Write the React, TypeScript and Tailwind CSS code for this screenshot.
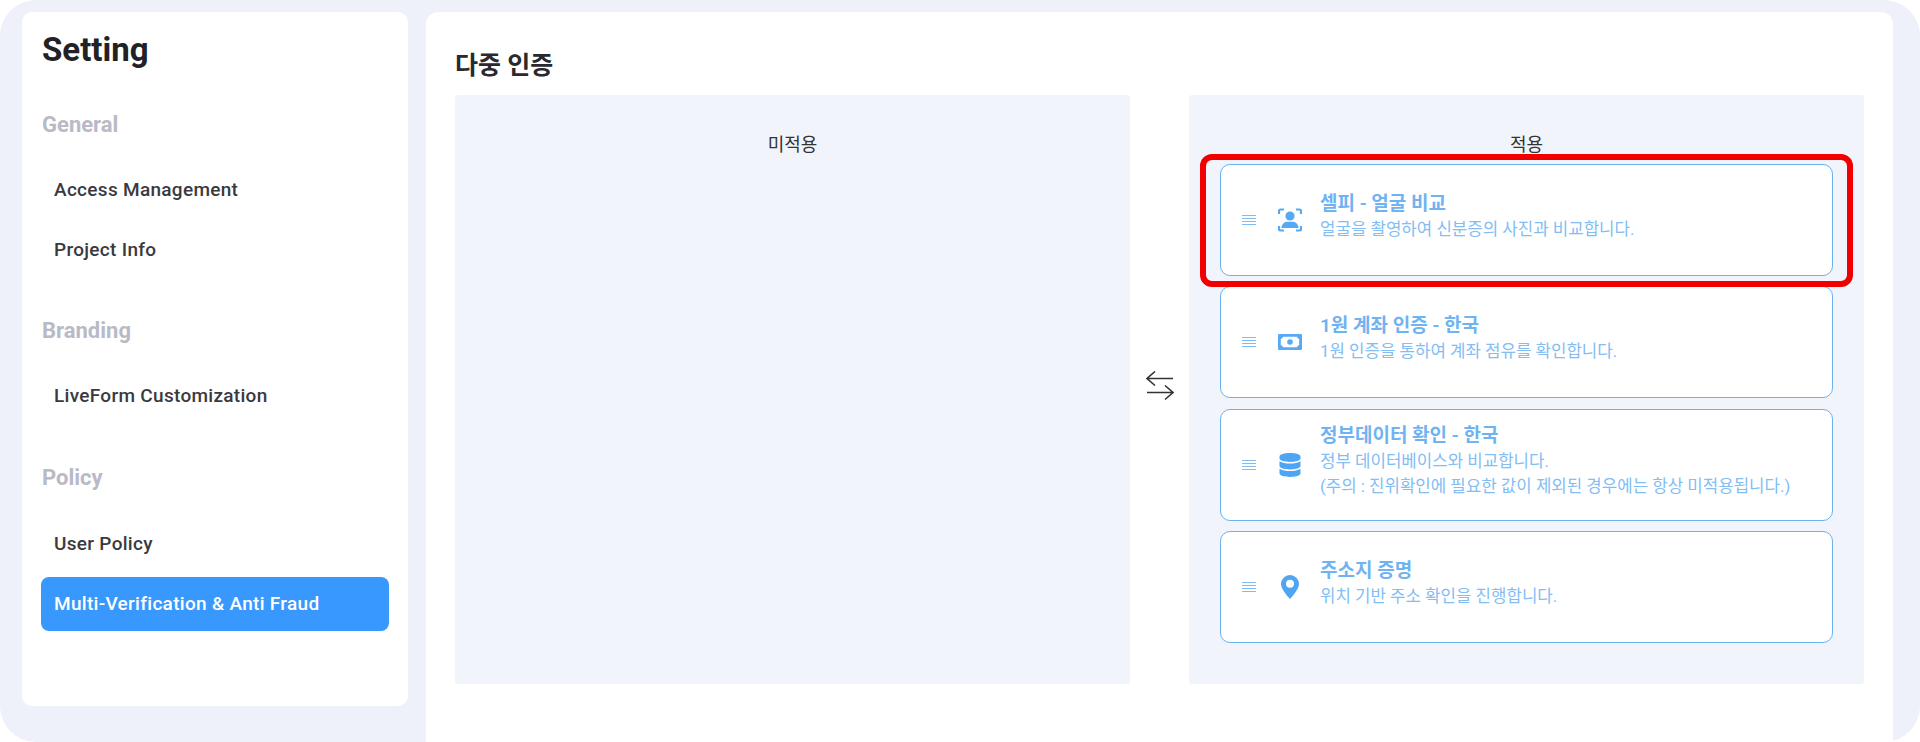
import { FaDatabase } from 'react-icons/fa';

const SANS = "font-['Roboto','Noto_Sans_CJK_KR',sans-serif]";

function DragHandle() {
  return (
    <svg width="14" height="12" viewBox="0 0 14 12" className="shrink-0 text-[#7fbcf4]" stroke="currentColor" strokeWidth="1">
      <path d="M0 1.5h14M0 4.5h14M0 7.5h14M0 10.5h14" />
    </svg>
  );
}

function FaceIcon() {
  return (
    <svg width="24" height="24" viewBox="0 0 24 24" fill="none" className="text-[#55a9f5]">
      <path d="M1 6V3a1.5 1.5 0 0 1 1.5-1.5H6M18 1.5h3.500A1.500 1.500 0 0 1 23 3v3M1 18v3a1.500 1.500 0 0 0 1.500 1.500H6M18 22.500h3.500A1.500 1.500 0 0 0 23 21v-3" stroke="currentColor" strokeWidth="2.200" />
      <circle cx="12" cy="8" r="4.600" fill="currentColor" />
      <path d="M3.500 20c0-3.800 3-6.300 5.500-6.300h6c2.500 0 5.500 2.500 5.500 6.300z" fill="currentColor" />
    </svg>
  );
}

function MoneyIcon() {
  return (
    <svg width="24" height="16" viewBox="0 0 24 16" className="text-[#55a9f5]">
      <path fillRule="evenodd" fill="currentColor" d="M1 0h22a1 1 0 0 1 1 1v14a1 1 0 0 1-1 1H1a1 1 0 0 1-1-1V1a1 1 0 0 1 1-1zm4 2.800A3 3 0 0 1 2.800 5v6A3 3 0 0 1 5 13.200h14a3 3 0 0 1 2.200-2.200V5A3 3 0 0 1 19 2.800z" />
      <circle cx="12" cy="8" r="2.800" fill="currentColor" />
    </svg>
  );
}

function PinIcon() {
  return (
    <svg width="18" height="24" viewBox="0 0 18 24" className="text-[#4da5f4]">
      <path fillRule="evenodd" fill="currentColor" d="M9 0a9 9 0 0 1 9 9c0 4.500-5 10.500-9 15C5 19.500 0 13.500 0 9a9 9 0 0 1 9-9zm0 4.800a4 4 0 1 0 0 8 4 4 0 0 0 0-8z" />
    </svg>
  );
}

function SwapIcon() {
  return (
    <svg width="28" height="30" viewBox="0 0 28 30" fill="none" stroke="#333" strokeWidth="1.600">
      <path d="M1 7.500h26M9 0.500 1 7.500l8 7" />
      <path d="M1 21.500h26M19 14.500l8 7-8 7" />
    </svg>
  );
}

const cards = [
  { title: '셀피 - 얼굴 비교', lines: ['얼굴을 촬영하여 신분증의 사진과 비교합니다.'], icon: <FaceIcon /> },
  { title: '1원 계좌 인증 - 한국', lines: ['1원 인증을 통하여 계좌 점유를 확인합니다.'], icon: <MoneyIcon /> },
  {
    title: '정부데이터 확인 - 한국',
    lines: ['정부 데이터베이스와 비교합니다.', '(주의 : 진위확인에 필요한 값이 제외된 경우에는 항상 미적용됩니다.)'],
    icon: <FaDatabase size={24} className="text-[#4da5f4]" />,
  },
  { title: '주소지 증명', lines: ['위치 기반 주소 확인을 진행합니다.'], icon: <PinIcon /> },
];

function SectionLabel({ children, className }: { children: string; className: string }) {
  return <div className={`pl-[20px] text-[22px] leading-[26px] font-bold text-[#b9bac6] ${className}`}>{children}</div>;
}

function NavItem({ label, active }: { label: string; active?: boolean }) {
  return (
    <div
      className={`mx-[19px] flex h-[54px] items-center rounded-[8px] px-[13px] text-[19px] font-medium tracking-[0.3px] ${
        active ? 'bg-[#3898fd] text-white' : 'text-[#3a3a3e]'
      }`}
    >
      {label}
    </div>
  );
}

export default function App() {
  return (
    <div className={`h-[742px] w-[1920px] overflow-hidden bg-white ${SANS}`}>
      <div className="flex h-full gap-[18px] rounded-[36px] bg-[#eff1fa] pl-[22px] pr-[27px] pt-[12px]">
        <aside className="flex h-[694px] w-[386px] shrink-0 flex-col rounded-[10px] bg-white">
          <h1 className="pl-[20px] pt-[18px] text-[33px] leading-[40px] font-bold text-[#222226]">Setting</h1>
          <SectionLabel className="mt-[42px] mb-[25px]">General</SectionLabel>
          <div className="flex flex-col gap-[6px]">
            <NavItem label="Access Management" />
            <NavItem label="Project Info" />
          </div>
          <SectionLabel className="mt-[41px] mb-[25px]">Branding</SectionLabel>
          <NavItem label="LiveForm Customization" />
          <SectionLabel className="mt-[42px] mb-[26px]">Policy</SectionLabel>
          <div className="flex flex-col gap-[6px]">
            <NavItem label="User Policy" />
            <NavItem label="Multi-Verification & Anti Fraud" active />
          </div>
        </aside>

        <main className="flex-1 rounded-t-[12px] bg-white pl-[29px] pr-[29px]">
          <h2 className="pt-[30px] pb-[6px] text-[25px] leading-[47px] font-semibold text-[#2a2a2e]">다중 인증</h2>
          <div className="flex h-[589px]">
            <section className="flex w-[675px] flex-col items-center rounded-[3px] bg-[#f1f4fb] pt-[38px]">
              <div className="text-[18px] leading-[24px] text-[#333]">미적용</div>
            </section>
            <div className="flex w-[59px] items-center justify-center pb-[7px]">
              <SwapIcon />
            </div>
            <section className="relative w-[675px] rounded-[3px] bg-[#f1f4fb] pt-[38px]">
              <div className="text-center text-[18px] leading-[24px] text-[#333]">적용</div>
              <div className="mt-[7px] flex flex-col gap-[10.4px] px-[31px]">
                {cards.map((c) => (
                  <div key={c.title} className="flex h-[112px] items-center rounded-[10px] border border-[#6ab2f0] bg-white pl-[21px]">
                    <DragHandle />
                    <div className="ml-[22px] flex w-[24px] shrink-0 justify-center">{c.icon}</div>
                    <div className="ml-[18px] pb-[8px]">
                      <div className="text-[19px] leading-[26px] font-semibold text-[#6fb3f2]">{c.title}</div>
                      {c.lines.map((l) => (
                        <div key={l} className="text-[16.8px] leading-[24.5px] text-[#82bdf4]">{l}</div>
                      ))}
                    </div>
                  </div>
                ))}
              </div>
              <div className="absolute left-[11px] top-[59px] h-[133px] w-[653px] rounded-[12px] border-[6px] border-[#f20000]" />
            </section>
          </div>
        </main>
      </div>
    </div>
  );
}
